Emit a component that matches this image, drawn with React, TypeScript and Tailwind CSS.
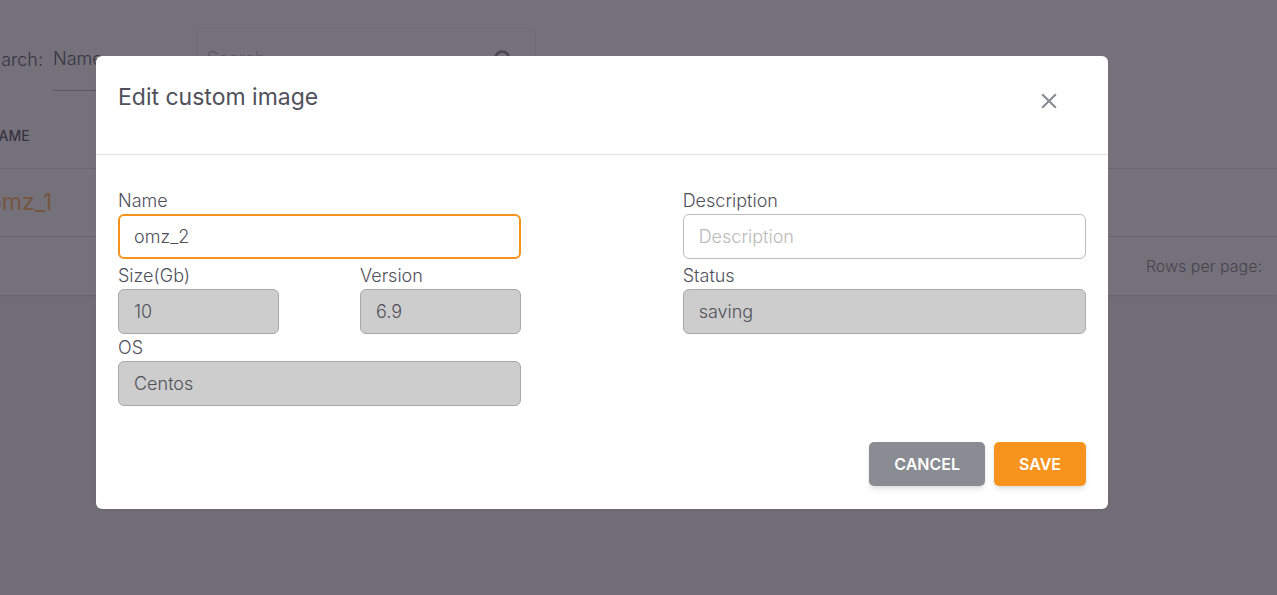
import { useState, type InputHTMLAttributes } from 'react';
import { Search } from 'lucide-react';

type FieldProps = InputHTMLAttributes<HTMLInputElement> & {
	id: string;
	label: string;
	wrapper?: string;
};

function Field({ id, label, wrapper = '', ...rest }: FieldProps) {
	return (
		<div className={`flex flex-col ${wrapper}`}>
			<label htmlFor={id} className="text-lg leading-[27px] font-light">{label}</label>
			<input
				id={id}
				type="text"
				className="h-[45px] w-full rounded-md border border-[#bcbcbc] bg-white px-[15px] text-lg font-light outline-none placeholder:text-[#b9b9b9] focus:border-2 focus:border-[#f7941d] focus:px-3.5 disabled:border-[#a9a9a9] disabled:bg-[#cdcdcd]"
				{...rest}
			/>
		</div>
	);
}

function ImagesPage() {
	return (
		<main className="-ml-4 min-h-screen overflow-hidden bg-[#f4f4f4]" aria-hidden="true">
			<section className="bg-white shadow-sm">
				<div className="flex h-[104px] items-start pt-7">
					<label htmlFor="search-by" className="w-[69px] shrink-0 pt-[18px] pr-2.5 text-right text-lg font-light whitespace-nowrap">
						<span className="float-right">Search:</span>
					</label>
					<select id="search-by" tabIndex={-1} className="h-[63px] w-[127px] appearance-none border-b border-[#b8b8b8] text-lg font-light">
						<option>Name</option>
					</select>
					<div className="ml-4 flex h-[61px] w-[340px] items-center rounded border border-[#f2f2f2] px-2.5">
						<input type="text" aria-label="Search" placeholder="Search" tabIndex={-1} className="min-w-0 flex-1 text-lg font-light placeholder:text-[#b9b9b9]" />
						<Search className="mr-3 size-5 text-[#8a7f90]" strokeWidth={3} />
					</div>
				</div>
				<table className="w-full text-left">
					<thead>
						<tr className="h-16 border-b border-[#dedede]">
							<th className="pl-1 text-sm font-medium">NAME</th>
						</tr>
					</thead>
					<tbody>
						<tr className="h-[68px] border-b border-[#dedede]">
							<td className="pl-1 text-[23px]">
								<a href="#omz_1" tabIndex={-1} className="text-[#ffb050]">omz_1</a>
							</td>
						</tr>
					</tbody>
				</table>
				<div className="flex h-[58px] items-center justify-end pr-[15px] font-light text-[#7b7b7b]">Rows per page:</div>
			</section>
		</main>
	);
}

export default function App() {
	const [name, setName] = useState('omz_2');
	const [description, setDescription] = useState('');

	return (
		<div className="relative overflow-hidden font-['Inter',sans-serif] text-[#50505a]">
			<ImagesPage />
			<div className="absolute inset-0 bg-[#2b2534]/65 pt-14 pr-[169px] pl-24">
				<div role="dialog" aria-modal="true" aria-labelledby="dialog-title" className="rounded-md bg-white shadow-xs">
					<header className="flex h-[99px] items-start justify-between border-b border-[#e2e2e2] px-[22px]">
						<h2 id="dialog-title" className="pt-6 text-[23px] leading-[34px]">Edit custom image</h2>
						<button type="button" aria-label="Close" className="mt-6 mr-4 p-2 text-[#8a8c93]">
							<svg viewBox="0 0 24 24" className="size-[26px]" fill="currentColor">
								<path d="M19 6.41L17.59 5 12 10.59 6.41 5 5 6.41 10.59 12 5 17.59 6.41 19 12 13.41 17.59 19 19 17.59 13.41 12z" />
							</svg>
						</button>
					</header>
					<form className="px-[22px] pt-8 pb-[23px]" onSubmit={(e) => e.preventDefault()}>
						<div className="grid grid-cols-12">
							<div className="col-span-5">
								<Field id="name" label="Name" wrapper="mb-[3px]" value={name} onChange={(e) => setName(e.target.value)} autoFocus />
								<div className="flex justify-between">
									<Field id="size" label="Size(Gb)" wrapper="w-2/5" value="10" disabled />
									<Field id="version" label="Version" wrapper="w-2/5" value="6.9" disabled />
								</div>
								<Field id="os" label="OS" value="Centos" disabled />
							</div>
							<div className="col-span-5 col-start-8">
								<Field
									id="description"
									label="Description"
									wrapper="mb-[3px]"
									placeholder="Description"
									value={description}
									onChange={(e) => setDescription(e.target.value)}
								/>
								<Field id="status" label="Status" value="saving" disabled />
							</div>
						</div>
						<div className="mt-9 flex justify-end gap-[9px] font-semibold text-white">
							<button type="button" className="h-11 rounded-[5px] bg-[#8a8c93] px-[25px] shadow-md">CANCEL</button>
							<button type="submit" className="h-11 rounded-[5px] bg-[#f7941d] px-[25px] shadow-md">SAVE</button>
						</div>
					</form>
				</div>
			</div>
		</div>
	);
}
